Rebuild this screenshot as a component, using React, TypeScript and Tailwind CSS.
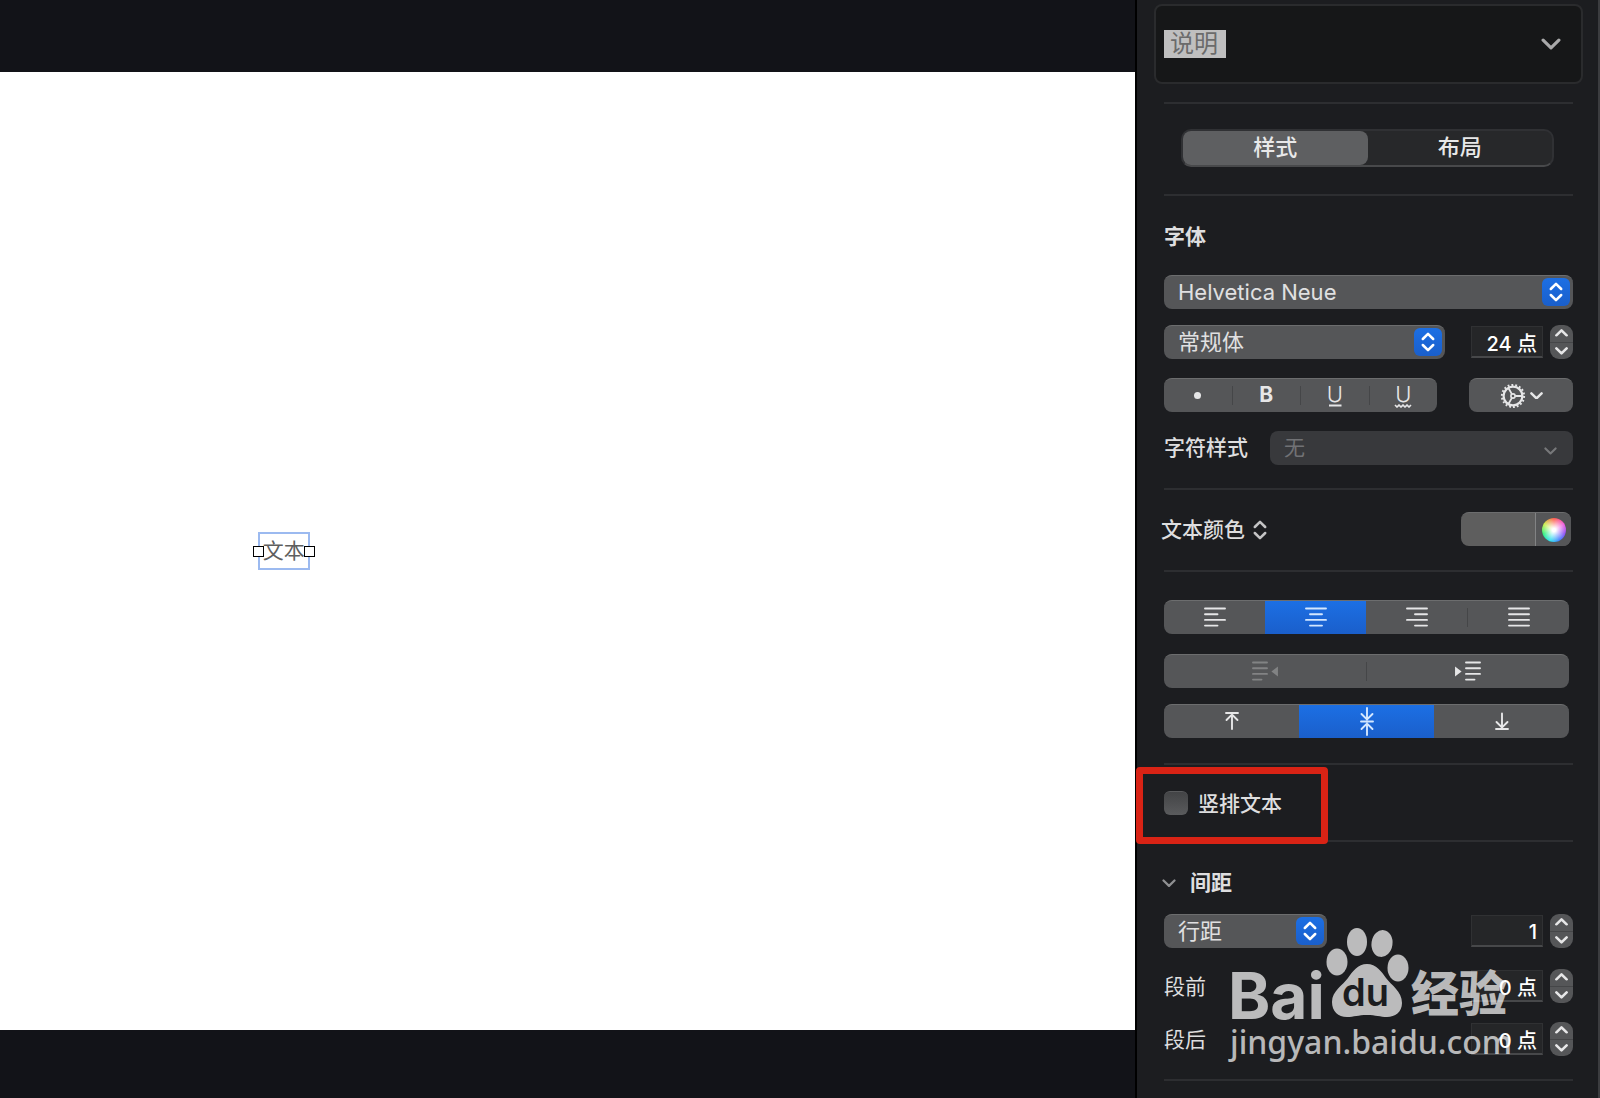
import React, { useState } from 'react';

const caret = 'absolute right-[3px] top-[3px] flex h-7 w-7 items-center justify-center rounded-md bg-linear-to-b from-[#1c6fe4] to-[#1a5fcb] pointer-events-none';

const UpDown: React.FC<{ className?: string }> = ({ className }) => (
    <svg width="14" height="20" viewBox="0 0 14 20" fill="none" stroke="currentColor" strokeWidth="2.5" strokeLinecap="round" strokeLinejoin="round" className={className}>
        <path d="M1.8 7 7 1.8 12.2 7M1.8 13 7 18.2 12.2 13" />
    </svg>
);

const Chevron: React.FC<{ width: number; className?: string; stroke?: number }> = ({ width, className, stroke = 2.4 }) => (
    <svg width={width} height={width * 0.6} viewBox="0 0 15 9" fill="none" stroke="currentColor" strokeWidth={stroke} strokeLinecap="round" strokeLinejoin="round" className={className}>
        <path d="M1.6 1.6 7.5 7.4 13.4 1.6" />
    </svg>
);

const Popup: React.FC<{ label: string; value: string; className: string }> = ({ label, value, className }) => (
    <div className={`relative h-[34px] ${className}`}>
        <select aria-label={label} className="h-full w-full appearance-none rounded-lg border-t border-[#6c6d6e] bg-[#555658] pb-[2px] pl-[14px] pr-9 text-[22px] leading-8 text-[#e0e0e1]">
            <option>{value}</option>
        </select>
        <span className={caret}>
            <UpDown className="text-white" />
        </span>
    </div>
);

const Stepper: React.FC<{ label: string; initial: number; unit?: string }> = ({ label, initial, unit }) => {
    const [value, setValue] = useState(initial);
    return (
        <div className="flex items-center gap-[7px]">
            <input
                aria-label={label}
                value={unit ? `${value} ${unit}` : `${value}`}
                onChange={e => setValue(parseInt(e.target.value) || 0)}
                className="h-8 w-[72px] border border-b-2 border-[#303133] border-b-[#47484a] bg-[#252628] pr-[5px] pt-[2px] text-right text-[20px] font-medium text-white"
            />
            <div className="flex h-[34px] w-[23px] flex-col overflow-hidden rounded-[9px] bg-[#555658] text-[#e6e6e7]">
                <button aria-label={`${label} +`} onClick={() => setValue(value + 1)} className="flex flex-1 items-center justify-center border-b border-[#454648]">
                    <Chevron width={13} stroke={3} className="rotate-180" />
                </button>
                <button aria-label={`${label} -`} onClick={() => setValue(value - 1)} className="flex flex-1 items-center justify-center">
                    <Chevron width={13} stroke={3} />
                </button>
            </div>
        </div>
    );
};

const Lines: React.FC<{ d: string; width?: number; children?: React.ReactNode }> = ({ d, width = 22, children }) => (
    <svg width={width} height="22" viewBox={`0 0 ${width} 22`} fill="none" stroke="currentColor" strokeWidth="1.9" strokeLinecap="round">
        <path d={d} />
        {children}
    </svg>
);

const Gear = () => (
    <svg width="26" height="26" viewBox="0 0 26 26" fill="none" stroke="currentColor">
        <circle cx="13" cy="13" r="11.1" strokeWidth="2" strokeDasharray="1.85 2.025" />
        <circle cx="13" cy="13" r="9.4" strokeWidth="2.2" />
        <circle cx="13" cy="13" r="2.1" strokeWidth="1.6" />
        <path d="M15.2 13H22M11.9 11.1 8.4 5M11.9 14.9 8.4 21" strokeWidth="1.8" />
    </svg>
);

const segments = 'flex h-[34px] overflow-hidden rounded-lg border-t border-[#6c6d6e] bg-[#555658] text-[#e6e6e7]';
const active = 'bg-linear-to-b from-[#1c6fe4] to-[#1a5fcb] text-[#d3e7ff]';

const alignments = [
    { name: '左对齐', d: 'M1 1.5H21M1 7.2H13.5M1 12.9H21M1 18.6H13.5' },
    { name: '居中', d: 'M1 1.5H21M5 7.2H17M1 12.9H21M5 18.6H17' },
    { name: '右对齐', d: 'M1 1.5H21M9 7.2H21M1 12.9H21M9 18.6H21' },
    { name: '两端对齐', d: 'M1 1.5H21M1 7.2H21M1 12.9H21M1 18.6H21' },
];

const verticals = [
    { name: '顶部', d: 'M2 6H14M8 22V7.5M2.5 13 8 7.5 13.5 13' },
    { name: '中间', d: 'M2 14.5H14M8 1V12.5M2.5 7 8 12.5 13.5 7M8 28V16.5M2.5 22 8 16.500 13.5 22' },
    { name: '底部', d: 'M2 22H14M8 6.5V20.5M2.5 15 8 20.5 13.5 15' },
];

const Divider = () => <span className="my-[7px] w-px shrink-0 bg-[#454648]" />;

const Watermark = () => (
    <div className="pointer-events-none absolute bottom-[34px] left-[91px] h-[138px] w-[290px] whitespace-nowrap text-white/70">
        <span className="absolute left-0 top-[52px] font-[Inter] text-[64px] font-bold leading-[36px]">Bai</span>
        <svg className="absolute left-[98px] top-0" width="84" height="92" viewBox="0 0 84 92" fill="currentColor">
            <ellipse cx="11" cy="36" rx="10.5" ry="13.5" />
            <ellipse cx="31" cy="16" rx="10" ry="14" />
            <ellipse cx="56" cy="17.5" rx="10.5" ry="13.5" transform="rotate(8 56 17.5)" />
            <ellipse cx="72" cy="42" rx="10.5" ry="13.5" />
            <path d="M41 38C50 38 56 46 60 52C65 59 76 65 76 77C76 86 69 91 61 91C54 91 50 89 41 89C32 89 28 91 21 91C12 91 6 85 6 76C6 65 17 59 22 52C26 46 32 38 41 38Z" />
        </svg>
        <span className="absolute left-[114px] top-[48px] font-[Inter] text-[38px] font-semibold leading-[36px] text-[#1c1d20]">du</span>
        <span className="absolute left-[183px] top-[50px] text-[48px] font-black leading-[36px]">经验</span>
        <span className="absolute left-[2px] top-[98px] font-['Noto_Sans'] text-[32px] font-medium leading-[36px]">jingyan.baidu.com</span>
    </div>
);

const App: React.FC = () => {
    const [tab, setTab] = useState('样式');
    const [align, setAlign] = useState('居中');
    const [vertical, setVertical] = useState('中间');

    return (
        <div className="flex min-h-screen bg-[#121318] font-[Inter,'Noto_Sans_CJK_SC',sans-serif] text-[#dededf]">
            {/* canvas */}
            <main className="flex flex-1 flex-col pb-[68px] pt-[72px]">
                <div className="relative flex-1 bg-white">
                    <div className="absolute left-1/4 top-1/2 flex h-[38px] w-[52px] -translate-x-1/2 -translate-y-1/2 items-center justify-center border-2 border-[#9cbaf0] text-[21px] leading-8 text-[#5f5f5f]">
                        <span className="whitespace-nowrap">文本</span>
                        <span className="absolute -left-[7px] top-3 h-[11px] w-[11px] border border-black bg-white" />
                        <span className="absolute -right-[7px] top-3 h-[11px] w-[11px] border border-black bg-white" />
                    </div>
                </div>
            </main>

            {/* inspector */}
            <aside className="relative w-[465px] shrink-0 border-l-2 border-r-2 border-l-black border-r-[#3b3c3f] bg-[#1c1d20] pb-[17px] pl-[27px] pr-[25px] pt-1">
                <button className="-mx-[10px] mb-[18px] flex h-20 w-[429px] items-center justify-between rounded-lg border-2 border-[#2a2b2d] bg-[#161718] pl-2 pr-5">
                    <span className="bg-[#bfbfbf] pl-[6px] pr-2 text-[24px] leading-7 text-[#6b6b6b]">说明</span>
                    <Chevron width={20} stroke={2.4} className="text-[#a9a9aa]" />
                </button>

                <section className="border-t-2 border-[#2d2e31] pb-[27px] pl-[17px] pr-[19px] pt-[25px]">
                    <div className="flex h-[38px] rounded-[10px] border-2 border-[#303134] border-b-[#48494b] bg-[#27282a]">
                        {['样式', '布局'].map(name => (
                            <button
                                key={name}
                                onClick={() => setTab(name)}
                                className={`flex-1 rounded-lg pb-[2px] text-[22px] font-medium leading-8 text-[#e8e8e9] ${tab === name ? 'bg-[#5e5f61]' : ''}`}
                            >
                                {name}
                            </button>
                        ))}
                    </div>
                </section>

                <section className="border-t-2 border-[#2d2e31] pb-[23px] pt-[25px]">
                    <h2 className="mb-[22px] text-[21px] font-bold leading-8">字体</h2>
                    <Popup label="字体" value="Helvetica Neue" className="w-full" />
                    <div className="mt-4 flex justify-between">
                        <Popup label="字体样式" value="常规体" className="w-[281px]" />
                        <Stepper label="字号" initial={24} unit="点" />
                    </div>
                    <div className="mt-[19px] flex justify-between">
                        <div className={`${segments} w-[273px]`}>
                            <button aria-label="项目符号" className="flex flex-1 items-center justify-center">
                                <span className="h-[7px] w-[7px] rounded-full bg-[#e6e6e7]" />
                            </button>
                            <Divider />
                            <button className="flex-1 pb-[2px] text-[21px] font-bold">B</button>
                            <Divider />
                            <button aria-label="下划线" className="flex flex-1 flex-col items-center justify-center">
                                <span className="text-[22px] font-light leading-5">U</span>
                                <svg width="14" height="3" viewBox="0 0 14 3" stroke="currentColor" strokeWidth="1.8">
                                    <path d="M1 1.500H13.500" />
                                </svg>
                            </button>
                            <Divider />
                            <button aria-label="波浪线" className="flex flex-1 flex-col items-center justify-center">
                                <span className="text-[22px] font-light leading-5">U</span>
                                <svg width="18" height="4" viewBox="0 0 18 4" fill="none" stroke="currentColor" strokeWidth="1.6">
                                    <path d="M1 1 3 3 5 1 7 3 9 1 11 3 13 1 15 3 17 1" />
                                </svg>
                            </button>
                        </div>
                        <button aria-label="高级选项" className="flex h-[34px] w-[104px] items-center justify-center gap-1 rounded-lg border-t border-[#6c6d6e] bg-[#555658] text-[#e6e6e7]">
                            <Gear />
                            <Chevron width={13} stroke={2.8} />
                        </button>
                    </div>
                    <div className="mt-[19px] flex items-center justify-between">
                        <label htmlFor="charStyle" className="text-[21px] font-medium leading-8">字符样式</label>
                        <div className="relative h-[34px] w-[303px]">
                            <select id="charStyle" disabled className="h-full w-full appearance-none rounded-lg bg-[#38393c] pl-[14px] text-[21px] text-[#717275] opacity-100">
                                <option>无</option>
                            </select>
                            <Chevron width={13} className="pointer-events-none absolute right-4 top-4 text-[#77787a]" />
                        </div>
                    </div>
                </section>

                <section className="flex items-center justify-between border-t-2 border-[#2d2e31] pb-6 pt-[22px]">
                    <button className="-ml-[3px] flex items-center gap-2 pt-[2px] text-[21px] font-medium leading-8">
                        文本颜色
                        <UpDown className="text-[#c4c4c5]" />
                    </button>
                    <div className="mr-[2px] flex h-[34px] w-[110px] overflow-hidden rounded-lg border-t border-[#6c6d6e] bg-[#5e5e5e]">
                        <button aria-label="颜色" className="flex-1" />
                        <button aria-label="色轮" className="flex w-9 items-center justify-center border-l border-[#828384] bg-[#555658]">
                            <span className="h-6 w-6 rounded-full bg-[radial-gradient(circle,#fff_10%,transparent_70%),conic-gradient(#ff5a4a,#f05ae0_60deg,#8a4cf5_110deg,#3f7dff_150deg,#2ee0f0_200deg,#2df07a_250deg,#c8f04a_300deg,#ff5a4a)]" />
                        </button>
                    </div>
                </section>

                <section className="border-t-2 border-[#2d2e31] pb-[25px] pr-1 pt-7">
                    <div className={segments}>
                        {alignments.map((item, i) => (
                            <React.Fragment key={item.name}>
                                {i === 3 && <Divider />}
                                <button
                                    aria-label={item.name}
                                    onClick={() => setAlign(item.name)}
                                    className={`flex flex-1 items-center justify-center ${align === item.name ? active : ''}`}
                                >
                                    <Lines d={item.d} />
                                </button>
                            </React.Fragment>
                        ))}
                    </div>
                    <div className={`${segments} mt-5`}>
                        <button aria-label="减少缩进" disabled className="flex flex-1 items-center justify-center text-[#828384]">
                            <Lines width={26} d="M1 1.5H15M1 7.2H15M1 12.9H15M1 18.6H9.5">
                                <path d="M25 7.5V13.5L21 10.5Z" fill="currentColor" />
                            </Lines>
                        </button>
                        <Divider />
                        <button aria-label="增加缩进" className="flex flex-1 items-center justify-center">
                            <Lines width={26} d="M11 1.5H25M11 7.2H25M11 12.9H25M11 18.6H19.5">
                                <path d="M1 7.5V13.5L5 10.5Z" fill="currentColor" />
                            </Lines>
                        </button>
                    </div>
                    <div className={`${segments} mt-4`}>
                        {verticals.map(item => (
                            <button
                                key={item.name}
                                aria-label={item.name}
                                onClick={() => setVertical(item.name)}
                                className={`flex flex-1 items-center justify-center ${vertical === item.name ? active : ''}`}
                            >
                                <svg width="16" height="29" viewBox="0 0 16 29" fill="none" stroke="currentColor" strokeWidth="1.9" strokeLinecap="round">
                                    <path d={item.d} />
                                </svg>
                            </button>
                        ))}
                    </div>
                </section>

                <section className="relative border-t-2 border-[#2d2e31] pb-[25px] pt-[26px]">
                    <label className="flex h-6 items-center gap-[10px] text-[21px] font-medium leading-6">
                        <input type="checkbox" className="h-6 w-6 appearance-none rounded-md border-t border-[#5a5b5d] bg-linear-to-b from-[#434446] to-[#5a5b5d] checked:from-[#1c6fe4] checked:to-[#1a5fcb]" />
                        <span className="pt-[2px]">竖排文本</span>
                    </label>
                    <span className="pointer-events-none absolute -left-[28px] top-[2px] z-10 h-[77px] w-[192px] rounded border-[7px] border-[#d92315]" />
                </section>

                <section className="border-t-2 border-[#2d2e31] pb-[23px] pt-[25px]">
                    <button className="-ml-[2px] mb-[15px] flex items-center gap-[14px] text-[21px] font-bold leading-8">
                        <Chevron width={14} className="text-[#8f9092]" />
                        间距
                    </button>
                    <div className="flex justify-between">
                        <Popup label="间距类型" value="行距" className="w-[163px]" />
                        <Stepper label="行距" initial={1} />
                    </div>
                    <div className="mt-[21px] flex items-center justify-between">
                        <span className="pt-[2px] text-[21px] leading-8">段前</span>
                        <Stepper label="段前" initial={0} unit="点" />
                    </div>
                    <div className="mt-[19px] flex items-center justify-between">
                        <span className="pt-[2px] text-[21px] leading-8">段后</span>
                        <Stepper label="段后" initial={0} unit="点" />
                    </div>
                </section>
                <hr className="border-t-2 border-[#2d2e31]" />

                <Watermark />
            </aside>
        </div>
    );
};

export default App;
